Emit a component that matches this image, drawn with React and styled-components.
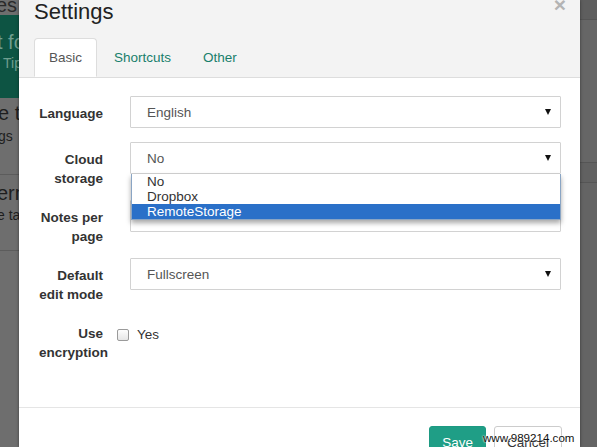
import React from "react";
import styled, { createGlobalStyle } from "styled-components";

const Global = createGlobalStyle`
  html, body { margin: 0; padding: 0; }
  body {
    width: 597px; height: 447px; overflow: hidden;
    font-family: "Liberation Sans", Arial, sans-serif;
    background: #6a6a6a;
  }
`;

const Page = styled.div`
  position: relative;
  display: flex;
  width: 597px;
  height: 447px;
  overflow: hidden;
`;

const LeftBackdrop = styled.div`
  width: 19px;
  flex: none;
  display: flex;
  flex-direction: column;
  background: #6e6e6e;
  overflow: hidden;
  white-space: nowrap;
`;

const BackBlock = styled.div`
  height: ${(p) => p.$h}px;
  flex: none;
  background: ${(p) => p.$bg || "transparent"};
  border-bottom: ${(p) => (p.$line ? "1px solid #5c5c5c" : "none")};
  display: flex;
  flex-direction: column;
  justify-content: ${(p) => p.$justify || "flex-start"};
  padding-top: ${(p) => p.$pt || 0}px;
  box-sizing: border-box;
`;

const BackText = styled.div`
  font-size: ${(p) => p.$size}px;
  line-height: ${(p) => p.$lh}px;
  color: ${(p) => p.$color};
  margin-left: ${(p) => p.$ml || 0}px;
`;

const RightBackdrop = styled.div`
  flex: 1;
  display: flex;
  flex-direction: column;
  background: #646464;
`;

const RightBand = styled.div`
  height: ${(p) => p.$h}px;
  flex: none;
  background: ${(p) => p.$bg};
  border-bottom: ${(p) => (p.$line ? "1px solid #555" : "none")};
  box-sizing: border-box;
`;

const Modal = styled.div`
  width: 561px;
  flex: none;
  height: 447px;
  background: #fff;
  display: flex;
  flex-direction: column;
  box-shadow: 0 0 3px rgba(0, 0, 0, 0.45);
  position: relative;
  z-index: 1;
  overflow: hidden;
`;

const Header = styled.div`
  position: relative;
  flex: none;
  background: #f3f3f3;
  height: 78px;
  box-sizing: border-box;
  border-bottom: 1px solid #dddddd;
  padding: 0 15px;
  display: flex;
  flex-direction: column;
`;

const Title = styled.h4`
  margin: -1px 0 0 0;
  font-size: 22px;
  line-height: 26px;
  font-weight: normal;
  color: #222;
`;

const Close = styled.span`
  position: absolute;
  right: 14px;
  top: -6px;
  font-size: 21px;
  line-height: 21px;
  color: #b4b4b4;
  font-weight: bold;
`;

const Tabs = styled.div`
  display: flex;
  gap: 2px;
  margin-top: 13px;
`;

const Tab = styled.div`
  padding: 9px 14px 10px;
  font-size: 13.5px;
  line-height: 19px;
  border: 1px solid ${(p) => (p.$active ? "#dddddd" : "transparent")};
  border-bottom-color: transparent;
  border-radius: 4px 4px 0 0;
  background: ${(p) => (p.$active ? "#fff" : "transparent")};
  color: ${(p) => (p.$active ? "#555" : "#187f6c")};
  margin-bottom: -1px;
  height: 39px;
  box-sizing: border-box;
`;

const Body = styled.div`
  flex: none;
  padding: 18px 19px 0 20px;
  height: 329px;
  box-sizing: border-box;
  display: flex;
  flex-direction: column;
  gap: 14px;
`;

const Row = styled.div`
  display: grid;
  grid-template-columns: 64px 1fr;
  column-gap: 27px;
  align-items: start;
`;

const Label = styled.div`
  font-weight: bold;
  font-size: 13.5px;
  line-height: 19px;
  padding-top: 8px;
  margin-bottom: -2px;
  text-align: right;
  color: #333;
`;

const ControlWrap = styled.div`
  position: relative;
`;

const Select = styled.div`
  height: 32px;
  box-sizing: border-box;
  border: 1px solid #d2d2d2;
  border-radius: 1px;
  background: #fff;
  display: flex;
  align-items: center;
  justify-content: space-between;
  padding: 0 9px 0 16px;
  font-size: 13.5px;
  color: #555;
`;

const Arrow = styled.span`
  width: 0;
  height: 0;
  border-left: 3.5px solid transparent;
  border-right: 3.5px solid transparent;
  border-top: 6px solid #111;
`;

const Options = styled.div`
  position: absolute;
  left: 1px;
  right: 0;
  top: 32px;
  background: #fff;
  border: 1px solid #8aa5c4;
  border-top: none;
  box-shadow: 0 3px 5px rgba(0, 0, 0, 0.35);
  z-index: 2;
  display: flex;
  flex-direction: column;
`;

const Option = styled.div`
  height: 15px;
  line-height: 15px;
  padding-left: 15px;
  font-size: 13.5px;
  color: ${(p) => (p.$selected ? "#fff" : "#333")};
  background: ${(p) => (p.$selected ? "#2a70c8" : "transparent")};
`;

const CheckLine = styled.label`
  display: flex;
  align-items: center;
  gap: 8px;
  margin-left: -13px;
  padding-top: 11px;
  font-size: 13.5px;
  color: #333;
`;

const Check = styled.span`
  width: 10px;
  height: 10px;
  border: 1px solid #9a9a9a;
  border-radius: 2px;
  background: linear-gradient(#fdfdfd, #e6e6e6);
`;

const Footer = styled.div`
  flex: none;
  border-top: 1px solid #e5e5e5;
  padding: 18px 18px 0;
  display: flex;
  justify-content: flex-end;
  gap: 8px;
`;

const Button = styled.div`
  height: 34px;
  box-sizing: border-box;
  padding: 6px 12px;
  font-size: 13.5px;
  line-height: 20px;
  border-radius: 3px;
  border: 1px solid ${(p) => (p.$primary ? "#1d9a82" : "#cccccc")};
  background: ${(p) => (p.$primary ? "#1f9e86" : "#fff")};
  color: ${(p) => (p.$primary ? "#fff" : "#333")};
`;

const Watermark = styled.div`
  position: absolute;
  left: 483px;
  top: 431px;
  font-size: 11.6px;
  line-height: 14px;
  color: #111;
  z-index: 5;
  text-shadow: 0 0 2px #fff, 0 0 2px #fff;
`;

const rows = [
  { label: "Language", value: "English", arrow: true },
  { label: "Cloud storage", value: "No", arrow: true, open: true },
  { label: "Notes per page", value: "" },
  { label: "Default edit mode", value: "Fullscreen", arrow: true },
];

export default function App() {
  return (
    <>
      <Global />
      <Page>
        <LeftBackdrop>
          <BackBlock $h={15} $justify="flex-end">
            <BackText $size={20} $lh={20} $color="#2a2a2a" $ml={-4}>es</BackText>
          </BackBlock>
          <BackBlock $h={83} $bg="#0d5443" $pt={15}>
            <BackText $size={20} $lh={24} $color="#6f9e8f" $ml={-3}>t fo</BackText>
            <BackText $size={14} $lh={18} $color="#6f9e8f" $ml={3}>Tip</BackText>
          </BackBlock>
          <BackBlock $h={77} $line $pt={2}>
            <BackText $size={20} $lh={26} $color="#1e1e1e" $ml={-2}>e ta</BackText>
            <BackText $size={14} $lh={20} $color="#1e1e1e" $ml={-2}>gs</BackText>
          </BackBlock>
          <BackBlock $h={76} $line $pt={6}>
            <BackText $size={20} $lh={24} $color="#1e1e1e" $ml={-3}>ern</BackText>
            <BackText $size={14} $lh={20} $color="#1e1e1e" $ml={-3}>e ta</BackText>
          </BackBlock>
          <BackBlock $h={200} />
        </LeftBackdrop>

        <Modal>
          <Header>
            <Title>Settings</Title>
            <Close>×</Close>
            <Tabs>
              <Tab $active>Basic</Tab>
              <Tab>Shortcuts</Tab>
              <Tab>Other</Tab>
            </Tabs>
          </Header>

          <Body>
            {rows.map((r) => (
              <Row key={r.label}>
                <Label>{r.label}</Label>
                <ControlWrap>
                  <Select>
                    <span>{r.value}</span>
                    {r.arrow && <Arrow />}
                  </Select>
                  {r.open && (
                    <Options>
                      <Option>No</Option>
                      <Option>Dropbox</Option>
                      <Option $selected>RemoteStorage</Option>
                    </Options>
                  )}
                </ControlWrap>
              </Row>
            ))}
            <Row>
              <Label>Use encryption</Label>
              <div>
                <CheckLine>
                  <Check />
                  Yes
                </CheckLine>
              </div>
            </Row>
          </Body>

          <Footer>
            <Button $primary>Save</Button>
            <Button>Cancel</Button>
          </Footer>
        </Modal>

        <RightBackdrop>
          <RightBand $h={20} $bg="#5e5e5e" $line />
          <RightBand $h={143} $bg="#666" $line />
          <RightBand $h={20} $bg="#616161" $line />
          <RightBand $h={264} $bg="#646464" />
        </RightBackdrop>

        <Watermark>www.989214.com</Watermark>
      </Page>
    </>
  );
}
